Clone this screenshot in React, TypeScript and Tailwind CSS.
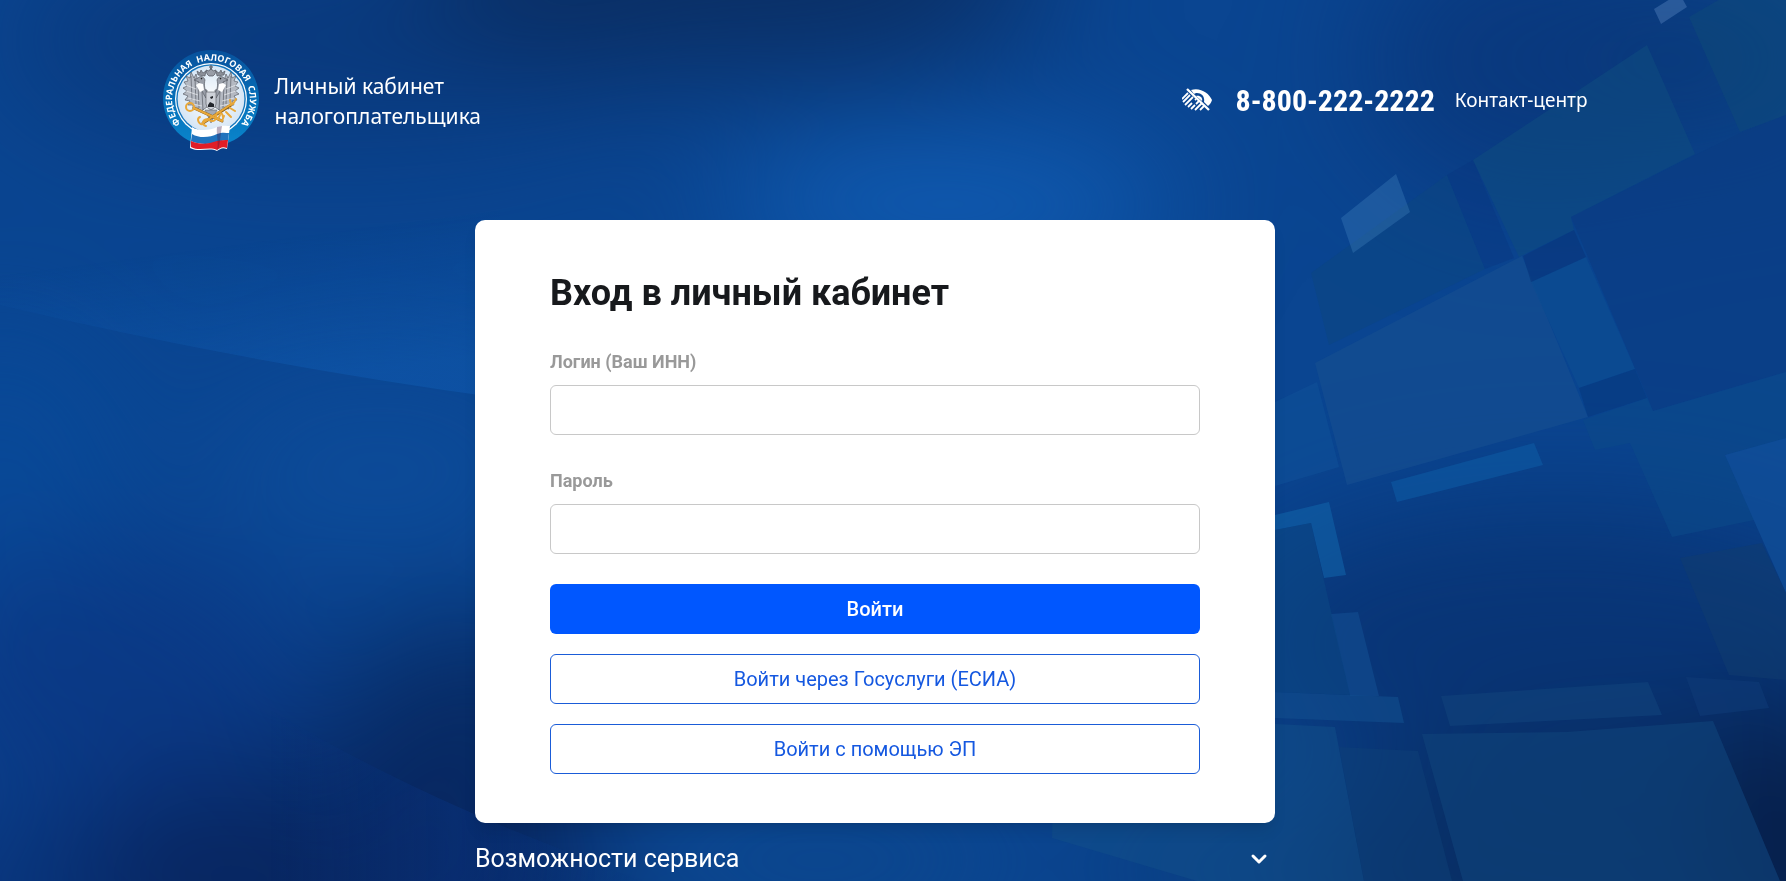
import { useState } from "react";
import type { FormEvent } from "react";
import { ChevronDown } from "lucide-react";

type Shape = { points: string; fill: string; opacity: number };

// soft colour clouds: cx, cy, rx, ry, colour, opacity
const clouds: [number, number, number, number, string, number][] = [
  [330, 40, 330, 110, "#0a3170", 0.55],
  [730, -30, 320, 110, "#0b2c5e", 0.85],
  [950, 205, 230, 60, "#1263bd", 0.85],
  [1540, 60, 180, 140, "#0a2f70", 0.55],
  [0, 470, 130, 150, "#064da0", 0.45],
  [380, 470, 180, 90, "#0f52a2", 0.45],
  [110, 680, 200, 130, "#0a3280", 0.65],
  [60, 900, 220, 80, "#082c70", 0.7],
  [480, 710, 150, 90, "#07265c", 0.85],
  [340, 890, 270, 130, "#08235c", 0.9],
  [820, 860, 200, 60, "#0d478c", 0.7],
  [1560, 640, 340, 140, "#072c68", 0.65],
  [1240, 870, 160, 90, "#0a3a76", 0.5],
  [1640, 880, 330, 160, "#082858", 0.75],
  [1800, 830, 90, 130, "#061c44", 0.95],
  [1740, 60, 120, 100, "#0a3874", 0.6],
];

const shapes: Shape[] = [
  { points: "1689,17 1722,-2 1786,-2 1786,115 1740,132", fill: "#0f4c77", opacity: 0.45 },
  { points: "1473,160 1647,45 1695,154 1571,217 1574,230 1519,257", fill: "#0f4c80", opacity: 0.55 },
  { points: "1311,273 1447,175 1485,269 1329,345", fill: "#0b467f", opacity: 0.5 },
  { points: "1447,175 1473,160 1514,258 1485,269", fill: "#08357f", opacity: 0.35 },
  { points: "1315,363 1522,256 1588,417 1347,485", fill: "#164f90", opacity: 0.65 },
  { points: "1531,282 1586,257 1635,369 1579,388", fill: "#0c4c92", opacity: 0.75 },
  { points: "1523,256 1574,230 1586,257 1531,282", fill: "#08357c", opacity: 0.6 },
  { points: "1571,217 1740,133 1786,115 1786,372 1653,411", fill: "#0a3c82", opacity: 0.65 },
  { points: "1579,388 1635,369 1647,398 1588,417", fill: "#07397f", opacity: 0.6 },
  { points: "1583,420 1647,398 1653,411 1786,372 1786,438 1725,455 1754,520 1672,537 1630,443 1595,450", fill: "#0b4a89", opacity: 0.6 },
  { points: "1725,455 1786,438 1786,593", fill: "#11509a", opacity: 0.7 },
  { points: "1680,558 1762,543 1786,593 1786,680 1729,675", fill: "#103d70", opacity: 0.55 },
  { points: "1391,482 1534,443 1543,465 1397,502", fill: "#0d5aa4", opacity: 0.6 },
  { points: "1275,515 1329,502 1346,575 1324,578 1311,523 1275,530", fill: "#1162a8", opacity: 0.6 },
  { points: "1331,614 1358,612 1379,696 1350,696", fill: "#145296", opacity: 0.5 },
  { points: "1275,692 1398,697 1404,723 1275,718", fill: "#125090", opacity: 0.55 },
  { points: "1054,724 1275,724 1335,727 1364,881 1197,881 1052,838", fill: "#125089", opacity: 0.5 },
  { points: "1339,747 1418,751 1452,881 1364,881", fill: "#0e4078", opacity: 0.5 },
  { points: "1441,696 1648,682 1662,715 1450,726", fill: "#11437b", opacity: 0.6 },
  { points: "1422,734 1567,732 1713,721 1780,881 1463,881", fill: "#10427a", opacity: 0.65 },
  { points: "1686,677 1759,682 1769,708 1700,716", fill: "#0f3b76", opacity: 0.6 },
  { points: "1275,402 1317,382 1339,467 1275,486", fill: "#0f5098", opacity: 0.6 },
  { points: "1275,530 1311,523 1350,695 1275,692", fill: "#0b4a86", opacity: 0.5 },
  { points: "1341,218 1396,174 1410,212 1353,253", fill: "#5a9fd6", opacity: 0.24 },
  { points: "1654,9 1675,-4 1682,-2 1687,7 1661,24", fill: "#7fa8dd", opacity: 0.28 },
];

function Backdrop() {
  return (
    <svg
      className="absolute inset-0 h-full w-full"
      viewBox="0 0 1786 881"
      preserveAspectRatio="xMidYMid slice"
      aria-hidden="true"
    >
      <defs>
        <filter id="soft" x="-300" y="-300" width="2400" height="1500" filterUnits="userSpaceOnUse" colorInterpolationFilters="sRGB">
          <feGaussianBlur stdDeviation="62" />
        </filter>
        <linearGradient id="beam" x1="0" y1="0" x2="0.3" y2="1">
          <stop offset="0.4" stopColor="#1160b8" stopOpacity="0" />
          <stop offset="1" stopColor="#1160b8" stopOpacity="0.4" />
        </linearGradient>
        <linearGradient id="ray" x1="0" y1="0" x2="1" y2="0">
          <stop offset="0" stopColor="#0a3a90" stopOpacity="0" />
          <stop offset="0.5" stopColor="#0a3a90" stopOpacity="0.3" />
          <stop offset="1" stopColor="#0a3a90" stopOpacity="0" />
        </linearGradient>
      </defs>
      <rect width="1786" height="881" fill="#0a4591" />
      <g filter="url(#soft)">
        {clouds.map(([cx, cy, rx, ry, fill, opacity], i) => (
          <ellipse key={i} cx={cx} cy={cy} rx={rx} ry={ry} fill={fill} opacity={opacity} />
        ))}
      </g>
      <path d="M0 305 Q240 362 500 398 V180 H0z" fill="url(#beam)" />
      <path d="M270 710 Q380 775 500 825 L640 881 H270z" fill="url(#ray)" />
      {shapes.map((s) => (
        <polygon key={s.points} points={s.points} fill={s.fill} opacity={s.opacity} />
      ))}
    </svg>
  );
}

function Wing() {
  return (
    <g fill="#b4b9c2" stroke="#4a4d55" strokeWidth="0.6">
      <path d="M44 40 C40 40 37 36 35 31 L33 24 L31 28 L28 22 L27 28 L23 26 L25 31 L21 32 L24 36 L20 38 L24 41 L20 44 L25 46 L22 50 L27 51 L25 55 L30 55 L30 59 L35 58 L37 62 L44 57z" />
      <path d="M28 26 L29 50 M32 28 L33 54 M35 34 L36 58 M39 42 L40 60" fill="none" />
      <path d="M23 35 L33 39 M23 41 L35 45 M25 48 L37 51 M29 54 L39 56" fill="none" stroke="#e3e6ea" strokeWidth="0.8" />
      <path d="M45 44 C41 40 41 34 42 30 C41 27 38 25 35 28 L31 30 L36 32 C37 37 39 42 43 48z" fill="#999ea8" />
      <path d="M33 35 L36 33 L40 34 L41 40 L37 42z" fill="#fff" stroke="none" />
      <path d="M35 25 L34 21 L37 23 L38 20 L40 23 L43 21 L42 26z" fill="#8b8f98" />
      <circle cx="38.5" cy="28.6" r="0.8" fill="#222" stroke="none" />
    </g>
  );
}

function Emblem() {
  return (
    <svg className="h-[102px] w-24 shrink-0" viewBox="0 0 96 102" role="img" aria-label="ФНС">
      <defs>
        <linearGradient id="ring" x1="0" y1="0" x2="0" y2="1">
          <stop offset="0" stopColor="#07519c" />
          <stop offset="0.6" stopColor="#0674bd" />
          <stop offset="1" stopColor="#0a86cc" />
        </linearGradient>
        <radialGradient id="disc">
          <stop offset="0" stopColor="#ffffff" />
          <stop offset="1" stopColor="#d6e6f5" />
        </radialGradient>
        <path id="arc" d="M13 68 L18 74 A38.8 38.8 0 1 1 78 74 L83 68" />
      </defs>
      <circle cx="48" cy="48" r="48" fill="url(#ring)" />
      <circle cx="48" cy="49" r="36" fill="#fff" />
      <circle cx="48" cy="49" r="34.8" fill="#1677bd" />
      <circle cx="48" cy="49" r="33.4" fill="url(#disc)" />
      <text className="font-['Noto_Sans',sans-serif] font-bold" fontSize="9" fill="#fff" textAnchor="middle">
        <textPath href="#arc" startOffset="50%">
          {"ФЕДЕРАЛЬНАЯ\u00a0 НАЛОГОВАЯ\u00a0 СЛУЖБА"}
        </textPath>
      </text>
      <Wing />
      <g transform="matrix(-1 0 0 1 96 0)">
        <Wing />
      </g>
      <path d="M44 24 L43 20 L46 21 L48 18 L50 21 L53 20 L52 24 L50 26 H46z" fill="#999ea8" stroke="#3f4249" strokeWidth="0.6" />
      <path d="M48 15 V20 M46 17 H50" stroke="#4a4d55" strokeWidth="1" />
      <path d="M43 42 H53 V54 Q53 58 48 60 Q43 58 43 54z" fill="#cdd1d8" stroke="#55585f" strokeWidth="0.6" />
      <path d="M45 55 L47 52 L51 54 L51 57 L45 57z M47 47 L50 46 L50 48 L48 49z" fill="#23262c" />
      <path d="M42 60 L48 73 L54 60z" fill="#a5aab3" stroke="#55585f" strokeWidth="0.5" />
      {/* crossed key and caduceus */}
      <g fill="none" stroke="#8f6015" strokeWidth="3" strokeLinecap="round">
        <path d="M31 58 L59 71" />
        <path d="M40 73 L68 55" />
      </g>
      <g fill="none" stroke="#e8a83a" strokeWidth="2" strokeLinecap="round">
        <circle cx="27" cy="57" r="4" />
        <path d="M31 58 L59 71 M55 69 L57 65 M59 71 L61 66" />
        <path d="M40 73 L70 53 M43 76 C37 74 41 67 46 70 C51 73 54 69 53 65 C54 60 60 63 60 67" />
        <path d="M68 55 L67 50 M70 54 L73 49 M67 58 L72 61 M63 62 L68 67" />
        <path d="M37 67 C33 69 36 75 40 74" />
      </g>
      <path d="M29 77 C36 82 48 80 54 77 C59 75 64 76 67 76 L64 99 C59 97 57 99 54 101 C46 97 37 103 27 98z" fill="#fff" />
      <path d="M29 84 C37 89 48 87 54 84 C59 82 63 83 66 83 L65 91 C60 90 57 91 54 93 C45 94 37 95 28 91z" fill="#2073bd" />
      <path d="M28 91 C37 95 45 94 54 91 C59 90 62 90 65 90 L64 98 C59 96 57 98 54 100 C46 96 37 102 28 97z" fill="#e11d26" />
      <path d="M54 77 C53 85 56 92 54 101 C57 98 57 87 59 76z" fill="#3b1a4a" opacity="0.35" />
    </svg>
  );
}

function LowVisionIcon() {
  return (
    <svg className="h-6 w-[30px]" viewBox="0 0 30 24" fill="none" stroke="#fff" aria-hidden="true">
      <path d="M9 2 C18 -1 27 5 30 12 C29 15 28 16 26 18 L22 14 C23 9 20 5 15 5 C14 5 13 5 12 6z" fill="#fff" stroke="none" />
      <path d="M14 8 C18 7 21 10 20 13z" fill="#fff" stroke="none" />
      <path d="M5 1 L27 22" strokeWidth="2.4" />
      <path d="M0 11 L6 5 M1 14 L8 7 M3 17 L11 9 M6 19 L10 15 M13 12 L14 11 M9 21 L13 17 M14 16 L17 13 M13 22 L20 15 M18 22 L22 18" strokeWidth="1.8" />
    </svg>
  );
}

const labelClass = "mb-[11px] block text-lg leading-6 font-bold text-[#999]";
const inputClass =
  "h-[50px] w-full rounded-md border border-[#c8c8c8] bg-white px-4 text-xl text-[#17191c] outline-none focus:border-[#0057ff]";
const outlineButton =
  "h-[50px] w-full cursor-pointer rounded-md border border-[#1a5cd8] bg-white pb-px text-xl text-[#1558e0] hover:bg-blue-50";

export default function App() {
  const [login, setLogin] = useState("");
  const [password, setPassword] = useState("");
  const [open, setOpen] = useState(false);

  const handleSubmit = (e: FormEvent) => {
    e.preventDefault();
  };

  return (
    <div className="relative min-h-screen overflow-hidden bg-[#0a4591] pr-9 font-['Roboto',sans-serif]">
      <Backdrop />

      <header className="relative mx-auto flex w-full max-w-[1425px] items-start justify-between pt-[50px]">
        <a href="#" className="flex items-start gap-4 text-white">
          <Emblem />
          <span className="pt-[21px] font-['Noto_Sans',sans-serif] text-[21px] leading-[30px]">
            Личный кабинет
            <br />
            налогоплательщика
          </span>
        </a>
        <div className="flex h-[100px] items-center text-white">
          <button type="button" aria-label="Версия для слабовидящих" className="mr-6 cursor-pointer">
            <LowVisionIcon />
          </button>
          <a href="tel:88002222222" className="mr-5 font-['Roboto_Condensed',sans-serif] text-[30px] font-bold">
            8-800-222-2222
          </a>
          <a href="#" className="font-['Noto_Sans',sans-serif] text-[19px]">Контакт-центр</a>
        </div>
      </header>

      <main className="relative mx-auto mt-[68px] w-full max-w-[800px]">
        <form onSubmit={handleSubmit} className="rounded-[10px] bg-white px-[75px] pt-[51px] pb-[49px] shadow-lg">
          <h1 className="mb-[35px] text-[36px] leading-[44px] font-bold text-[#17191c]">Вход в личный кабинет</h1>

          <div className="mb-[34px]">
            <label htmlFor="login" className={labelClass}>
              Логин (Ваш ИНН)
            </label>
            <input
              id="login"
              type="text"
              value={login}
              onChange={(e) => setLogin(e.target.value)}
              className={inputClass}
            />
          </div>

          <div className="mb-[30px]">
            <label htmlFor="password" className={labelClass}>
              Пароль
            </label>
            <input
              id="password"
              type="password"
              value={password}
              onChange={(e) => setPassword(e.target.value)}
              className={inputClass}
            />
          </div>

          <div className="flex flex-col gap-5">
            <button type="submit" className="h-[50px] w-full cursor-pointer rounded-md bg-[#0057ff] text-xl font-medium text-white hover:bg-blue-700">
              Войти
            </button>
            <button type="button" className={outlineButton}>Войти через Госуслуги (ЕСИА)</button>
            <button type="button" className={outlineButton}>Войти с помощью ЭП</button>
          </div>
        </form>

        <button
          type="button"
          aria-expanded={open}
          onClick={() => setOpen(!open)}
          className="mt-4 flex w-full cursor-pointer items-center justify-between pr-1 text-[25px] leading-10 text-white"
        >
          Возможности сервиса
          <ChevronDown className="h-6 w-6" strokeWidth={3} />
        </button>
      </main>
    </div>
  );
}
